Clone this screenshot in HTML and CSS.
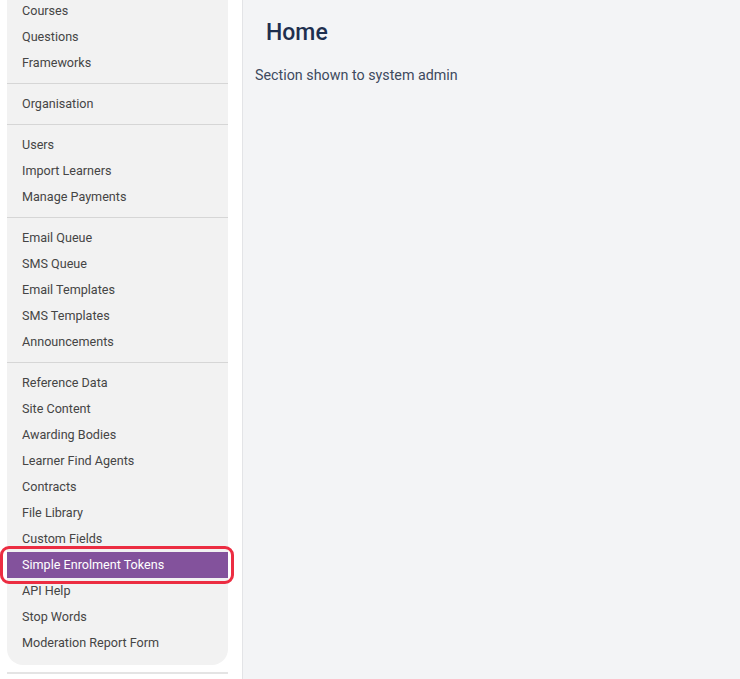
FILE: index.html
```html
<!DOCTYPE html>
<html lang="en">
<head>
  <meta charset="UTF-8" />
  <meta name="viewport" content="width=device-width, initial-scale=1.0"/>
  <title>Home</title>
  <link rel="stylesheet" href="styles.css">
</head>
<body>
<div class="layout">
  <aside class="sidebar">
    <div class="side-panel">
      <div class="nav-group first">
        <a class="nav-item" href="#">Courses</a>
        <a class="nav-item" href="#">Questions</a>
        <a class="nav-item" href="#">Frameworks</a>
      </div>
      <div class="nav-group">
        <a class="nav-item" href="#">Organisation</a>
      </div>
      <div class="nav-group">
        <a class="nav-item" href="#">Users</a>
        <a class="nav-item" href="#">Import Learners</a>
        <a class="nav-item" href="#">Manage Payments</a>
      </div>
      <div class="nav-group">
        <a class="nav-item" href="#">Email Queue</a>
        <a class="nav-item" href="#">SMS Queue</a>
        <a class="nav-item" href="#">Email Templates</a>
        <a class="nav-item" href="#">SMS Templates</a>
        <a class="nav-item" href="#">Announcements</a>
      </div>
      <div class="nav-group">
        <a class="nav-item" href="#">Reference Data</a>
        <a class="nav-item" href="#">Site Content</a>
        <a class="nav-item" href="#">Awarding Bodies</a>
        <a class="nav-item" href="#">Learner Find Agents</a>
        <a class="nav-item" href="#">Contracts</a>
        <a class="nav-item" href="#">File Library</a>
        <a class="nav-item" href="#">Custom Fields</a>
        <a class="nav-item active" href="#">Simple Enrolment Tokens</a>
        <a class="nav-item" href="#">API Help</a>
        <a class="nav-item" href="#">Stop Words</a>
        <a class="nav-item" href="#">Moderation Report Form</a>
      </div>
    </div>
    <div class="side-rule"></div>
  </aside>
  <main class="content">
    <h1 class="page-title">Home</h1>
    <p class="page-note">Section shown to system admin</p>
  </main>
</div>
</body>
</html>
```

FILE: styles.css
```css
html, body {
  margin: 0;
  padding: 0;
  height: 100%;
}
body {
  font-family: Roboto, "Liberation Sans", sans-serif;
  background-color: #fff;
  overflow: hidden;
}
.layout {
  display: flex;
  height: 100%;
}
.sidebar {
  width: 221px;
  flex-shrink: 0;
  padding: 0 14px 0 7px;
  margin-top: -9px;
}
.side-panel {
  background: #f2f2f2;
  border-radius: 0 0 16px 16px;
  padding-bottom: 2px;
}
.nav-group {
  padding: 7px 0;
  border-top: 1px solid #d6d6d6;
}
.nav-group.first {
  border-top: none;
}
.nav-item {
  display: block;
  height: 26px;
  line-height: 26px;
  padding-left: 15px;
  font-size: 12.6px;
  color: #454545;
  text-decoration: none;
}
.nav-item.active {
  position: relative;
  background: #83529c;
  color: #fff;
}
.nav-item.active::after {
  content: "";
  position: absolute;
  top: -6px;
  bottom: -6px;
  left: -7px;
  right: -6px;
  border: 3px solid #ec2d42;
  border-radius: 9px;
}
.side-rule {
  height: 2px;
  margin-top: 7px;
  background: #e4e4e4;
}
.content {
  flex: 1;
  background: #f3f4f6;
  border-left: 1px solid #e3e4e7;
  padding: 0 12px;
}
.page-title {
  margin: 18px 0 0 11px;
  font-size: 23px;
  font-weight: 500;
  color: #1e2f4f;
  line-height: 30px;
}
.page-note {
  margin: 17px 0 0;
  font-size: 14.3px;
  color: #3e4a5e;
  line-height: 20px;
}
```
